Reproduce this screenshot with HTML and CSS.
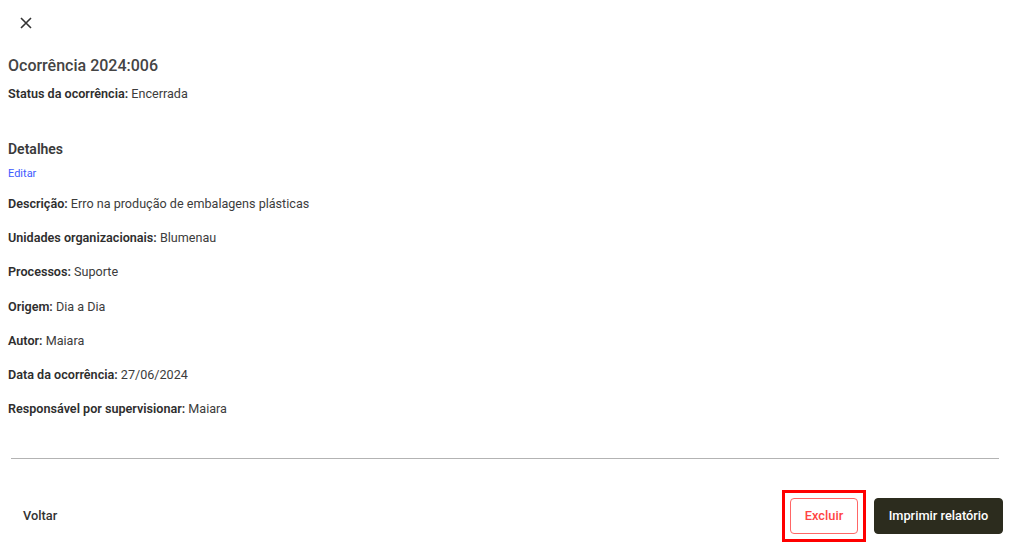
FILE: index.html
```html
<!DOCTYPE html>
<html>
	<head>
		<meta charset="utf-8" />
		<title>Ocorrência 2024:006</title>
		<link rel="stylesheet" href="styles.css">
	</head>
	<body>
		<div class="modal">
			<a class="btn-close">
				<svg width="12" height="12" viewBox="0 0 12 12"><path d="M1 1L11 11M11 1L1 11" stroke="#333" stroke-width="1.6" fill="none"/></svg>
			</a>
			<h1 class="title">Ocorrência 2024:006</h1>
			<p class="row status"><b>Status da ocorrência:</b> Encerrada</p>
			<h2 class="subtitle">Detalhes</h2>
			<a class="link-edit">Editar</a>
			<div class="details">
				<p class="row"><b>Descrição:</b> Erro na produção de embalagens plásticas</p>
				<p class="row"><b>Unidades organizacionais:</b> Blumenau</p>
				<p class="row"><b>Processos:</b> Suporte</p>
				<p class="row"><b>Origem:</b> Dia a Dia</p>
				<p class="row"><b>Autor:</b> Maiara</p>
				<p class="row"><b>Data da ocorrência:</b> 27/06/2024</p>
				<p class="row"><b>Responsável por supervisionar:</b> Maiara</p>
			</div>
			<hr class="divider">
			<div class="footer">
				<a class="btn btn-text">Voltar</a>
				<div class="actions">
					<span class="highlight"><a class="btn btn-outline">Excluir</a></span>
					<a class="btn btn-dark">Imprimir relatório</a>
				</div>
			</div>
		</div>
	</body>
</html>
```

FILE: styles.css
```css
*{
	margin: 0;
	padding: 0;
	box-sizing: border-box;
}
body{
	font-family: Roboto, "Liberation Sans", sans-serif;
	color: #333;
	background-color: white;
}
a{
	text-decoration: none;
	color: inherit;
	cursor: pointer;
}
.modal{
	padding: 17px 9px 0 8px;
}
.btn-close{
	display: block;
	width: 12px;
	height: 12px;
	margin-left: 12px;
}
.btn-close svg{
	display: block;
}
.title{
	margin-top: 27px;
	font-size: 16px;
	font-weight: 500;
	line-height: 20px;
	color: #444;
}
.row{
	font-size: 12.6px;
	line-height: 16px;
	color: #3c3c3c;
}
.row b{
	font-weight: 600;
	color: #2e2e2e;
}
.status{
	margin-top: 10px;
}
.subtitle{
	margin-top: 38px;
	font-size: 14px;
	font-weight: 600;
	line-height: 18px;
	color: #3a3a3a;
}
.link-edit{
	display: block;
	margin-top: 9px;
	font-size: 11px;
	line-height: 14px;
	color: #3d5afe;
}
.details{
	display: flex;
	flex-direction: column;
	gap: 18.2px;
	margin-top: 15px;
}
.divider{
	margin: 41px 4px 0 3px;
	border: none;
	border-top: 1px solid #b3b3b3;
}
.footer{
	display: flex;
	justify-content: space-between;
	align-items: center;
	margin-top: 31px;
}
.actions{
	display: flex;
	align-items: center;
	gap: 8px;
}
.btn{
	display: inline-block;
	height: 36px;
	line-height: 34px;
	font-size: 12.8px;
	font-weight: 500;
	text-align: center;
	border-radius: 4px;
	border: 1px solid transparent;
}
.btn-text{
	padding: 0 14px;
	color: #333;
}
.highlight{
	display: block;
	padding: 5px;
	border: 3px solid #f00;
}
.btn-outline{
	display: block;
	width: 68px;
	border-color: #f66;
	color: #f44;
	background-color: white;
}
.btn-dark{
	width: 129px;
	background-color: #2c2c1e;
	border-color: #2c2c1e;
	color: white;
}
```
